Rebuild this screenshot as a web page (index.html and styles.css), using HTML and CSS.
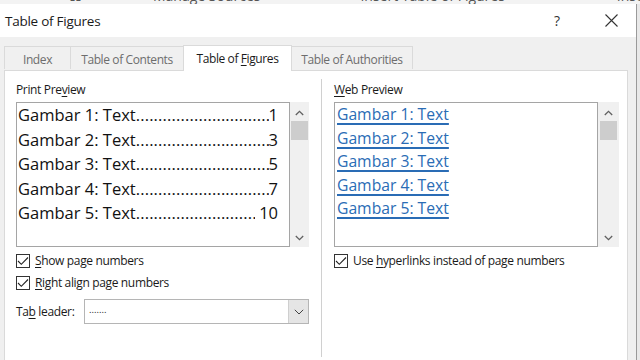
FILE: index.html
```html
<!DOCTYPE html>
<html>
<head>
<meta charset="utf-8">
<link rel="stylesheet" href="styles.css">
</head>
<body>
<div class="ribbon">
  <span class="rb rb1">Ω</span>
  <span class="rb rb2">Manage Sources</span>
  <span class="rb rb3">Insert Table of Figures</span>
  <span class="rb rb4">Insert Ind</span>
</div>
<div class="dialog">
  <div class="titlebar">
    <span class="title">Table of Figures</span>
    <span class="help">?</span>
    <svg class="close" width="13" height="13" viewBox="0 0 13 13"><path d="M0.5 0.5L12.5 12.5M12.5 0.5L0.5 12.5" stroke="#333" stroke-width="1.1" fill="none"/></svg>
  </div>
  <div class="tabs">
    <div class="tab tab-index">Index</div>
    <div class="tab tab-toc">Table of Contents</div>
    <div class="tab tab-tof active">Table of <u>F</u>igures</div>
    <div class="tab tab-toa">Table of Authorities</div>
  </div>
  <div class="panel">
    <div class="col col-left">
      <div class="label">Print Pre<u>v</u>iew</div>
      <div class="preview">
        <div class="list print">
          <div class="entry"><span class="name">Gambar 1: Text</span><span class="dots">..............................................................</span><span class="num">1</span></div>
          <div class="entry"><span class="name">Gambar 2: Text</span><span class="dots">..............................................................</span><span class="num">3</span></div>
          <div class="entry"><span class="name">Gambar 3: Text</span><span class="dots">..............................................................</span><span class="num">5</span></div>
          <div class="entry"><span class="name">Gambar 4: Text</span><span class="dots">..............................................................</span><span class="num">7</span></div>
          <div class="entry"><span class="name">Gambar 5: Text</span><span class="dots">..............................................................</span><span class="num">&nbsp;10</span></div>
        </div>
        <div class="scrollbar">
          <svg class="arrow" width="9" height="6" viewBox="0 0 9 6"><path d="M0.8 5L4.5 1.3L8.2 5" stroke="#606060" stroke-width="1.3" fill="none"/></svg>
          <div class="thumb"></div>
          <div class="track"></div>
          <svg class="arrow" width="9" height="6" viewBox="0 0 9 6"><path d="M0.8 1L4.5 4.7L8.2 1" stroke="#606060" stroke-width="1.3" fill="none"/></svg>
        </div>
      </div>
      <label class="check"><span class="box"><svg width="12" height="10" viewBox="0 0 12 10"><path d="M1 5L4.3 8.3L11 1.5" stroke="#222" stroke-width="1.1" fill="none"/></svg></span><span><u>S</u>how page numbers</span></label>
      <label class="check"><span class="box"><svg width="12" height="10" viewBox="0 0 12 10"><path d="M1 5L4.3 8.3L11 1.5" stroke="#222" stroke-width="1.1" fill="none"/></svg></span><span><u>R</u>ight align page numbers</span></label>
      <div class="leader">
        <span class="leader-label">Ta<u>b</u> leader:</span>
        <div class="select">
          <span class="select-value">.......</span>
          <span class="select-btn"><svg width="10" height="6" viewBox="0 0 10 6"><path d="M0.8 0.8L5 5L9.2 0.8" stroke="#444" stroke-width="1" fill="none"/></svg></span>
        </div>
      </div>
    </div>
    <div class="col col-right">
      <div class="label"><u>W</u>eb Preview</div>
      <div class="preview">
        <div class="list web">
          <div class="link">Gambar 1: Text</div>
          <div class="link">Gambar 2: Text</div>
          <div class="link">Gambar 3: Text</div>
          <div class="link">Gambar 4: Text</div>
          <div class="link">Gambar 5: Text</div>
        </div>
        <div class="scrollbar">
          <svg class="arrow" width="9" height="6" viewBox="0 0 9 6"><path d="M0.8 5L4.5 1.3L8.2 5" stroke="#606060" stroke-width="1.3" fill="none"/></svg>
          <div class="thumb"></div>
          <div class="track"></div>
          <svg class="arrow" width="9" height="6" viewBox="0 0 9 6"><path d="M0.8 1L4.5 4.7L8.2 1" stroke="#606060" stroke-width="1.3" fill="none"/></svg>
        </div>
      </div>
      <label class="check"><span class="box"><svg width="12" height="10" viewBox="0 0 12 10"><path d="M1 5L4.3 8.3L11 1.5" stroke="#222" stroke-width="1.1" fill="none"/></svg></span><span>Use <u>h</u>yperlinks instead of page numbers</span></label>
    </div>
  </div>
</div>
</body>
</html>
```
FILE: styles.css
```css
* { box-sizing: border-box; }
html, body {
  margin: 0;
  padding: 0;
}
body {
  width: 640px;
  height: 360px;
  overflow: hidden;
  background: #e9e9e9;
  font-family: "Open Sans", "Noto Sans", sans-serif;
  color: #1a1a1a;
}
u { text-decoration: underline; text-underline-offset: 2px; text-decoration-thickness: 1px; }

.ribbon {
  height: 4px;
  overflow: hidden;
  background: #f3f3f3;
  display: flex;
  position: relative;
}
.rb {
  font-size: 14px;
  line-height: 14px;
  margin-top: -11px;
  color: #555;
  white-space: nowrap;
}
.rb1 { margin-left: 70px; }
.rb2 { margin-left: 72px; }
.rb3 { margin-left: 100px; }
.rb4 { margin-left: 112px; }

.dialog {
  width: 637px;
  height: 356px;
  background: #f0f0f0;
  border-right: 1px solid #9a9a9a;
  display: flex;
  flex-direction: column;
}
.titlebar {
  height: 33px;
  background: #ffffff;
  display: flex;
  align-items: center;
  padding-left: 5px;
}
.title {
  font-size: 13.5px;
  letter-spacing: -0.25px;
  color: #1a1a1a;
  flex: 1;
}
.help {
  font-size: 14px;
  color: #333;
  margin-right: 45px;
}
.close { margin-right: 18px; }

.tabs {
  display: flex;
  align-items: flex-end;
  height: 33px;
  padding-left: 4px;
}
.tab {
  height: 23px;
  font-size: 12px;
  letter-spacing: -0.4px;
  line-height: 25px;
  color: #6d6d6d;
  background: #f0f0f0;
  border: 1px solid #dadada;
  border-bottom: none;
  border-left: none;
  text-align: center;
  margin-bottom: 1px;
  overflow: hidden;
}
.tab-index { width: 67px; border-left: 1px solid #dadada; }
.tab-toc { width: 113px; }
.tab-tof { width: 109px; }
.tab-toa { width: 121px; }
.tab.active {
  background: #ffffff;
  color: #1a1a1a;
  height: 26px;
  line-height: 26px;
  margin-bottom: -1px;
  position: relative;
  z-index: 1;
  border-left: 1px solid #dadada;
  margin-left: -1px;
}

.panel {
  flex: 1;
  margin-left: 4px;
  margin-right: 8px;
  background: #ffffff;
  border: 1px solid #dadada;
  border-bottom: none;
  display: grid;
  grid-template-columns: 316px 1fr;
}
.col { display: flex; flex-direction: column; }
.col-left { padding: 8px 12px 0 11px; }
.col-right {
  border-left: 1px solid #d0d0d0;
  margin: 8px 0 3px;
  padding: 0 8px 0 12px;
}
.label {
  font-size: 12px;
  letter-spacing: -0.35px;
  line-height: 16px;
  height: 16px;
  margin-top: 3px;
  margin-bottom: 4px;
  color: #1a1a1a;
}

.preview {
  display: flex;
  height: 145px;
}
.list {
  flex: 1;
  border: 1px solid #a5a5a5;
  background: #fff;
  overflow: hidden;
}
.print {
  padding: 0 11px 0 1px;
  font-size: 16.5px;
  line-height: 24.5px;
  color: #111;
}
.entry {
  display: flex;
  white-space: nowrap;
}
.name { flex: none; }
.dots {
  flex: 1;
  overflow: hidden;
  letter-spacing: 0.15px;
}
.num { flex: none; }

.web {
  padding: 0 0 0 2px;
  font-size: 15.7px;
  line-height: 23.5px;
}
.link {
  color: #2a6cb5;
  text-decoration: underline;
  text-decoration-thickness: 1.5px;
  text-underline-offset: 3px;
  white-space: nowrap;
}

.scrollbar {
  width: 19px;
  flex: none;
  background: #f0f0f0;
  display: flex;
  flex-direction: column;
  align-items: center;
}
.col-right .scrollbar { width: 21px; }
.arrow { margin: 8px 0 5px; flex: none; }
.thumb {
  width: 17px;
  height: 19px;
  background: #cdcdcd;
  flex: none;
}
.track { flex: 1; }
.scrollbar .arrow:last-child { margin: 4px 0 6px; }

.check {
  display: flex;
  align-items: center;
  font-size: 12px;
  letter-spacing: -0.35px;
  line-height: 16px;
  margin-top: 6px;
  height: 16px;
  color: #1a1a1a;
}
.check + .check { margin-top: 6px; }
.box {
  width: 14px;
  height: 14px;
  border: 1px solid #333;
  background: #fff;
  margin-right: 5px;
  display: flex;
  align-items: center;
  justify-content: center;
  flex: none;
}

.leader {
  display: flex;
  align-items: center;
  margin-top: 8px;
  font-size: 12px;
  letter-spacing: -0.35px;
}
.leader-label { width: 68px; flex: none; }
.select {
  flex: 1;
  height: 25px;
  border: 1px solid #b5b5b5;
  display: flex;
  align-items: stretch;
  background: #fff;
}
.select-value {
  flex: 1;
  font-size: 9.5px;
  letter-spacing: 0;
  line-height: 20px;
  padding-left: 4px;
  color: #222;
}
.select-btn {
  width: 20px;
  background: #e5e5e5;
  border-left: 1px solid #cfcfcf;
  display: flex;
  align-items: center;
  justify-content: center;
}
```
